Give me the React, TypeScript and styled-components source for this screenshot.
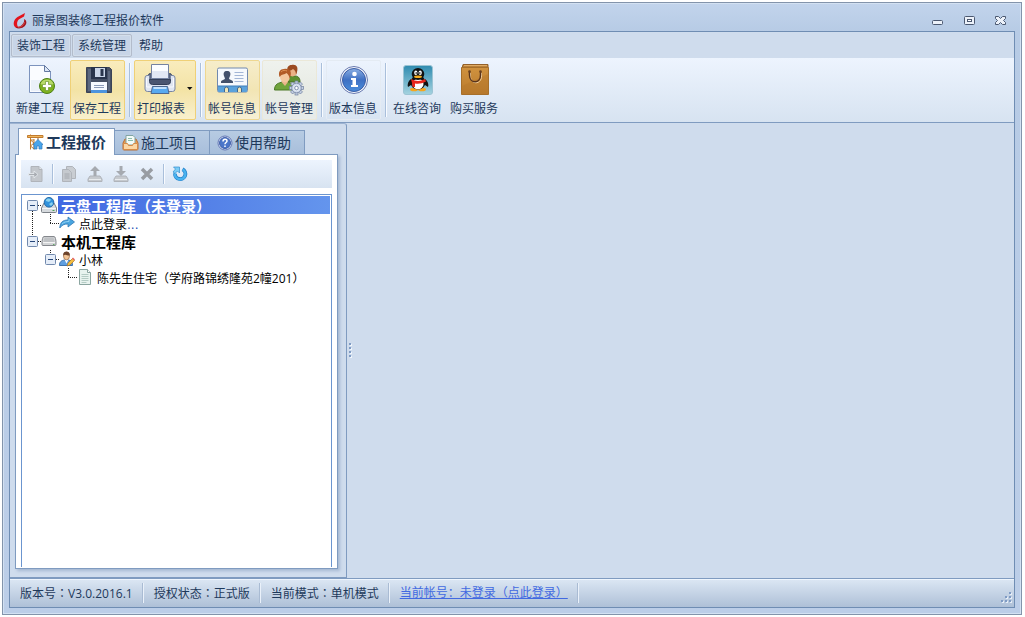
import React from "react";
import styled, { createGlobalStyle, css } from "styled-components";

const ink = "#1e395b";
const line = "#7f9bc0";
const face = "#cfdced";

const GlobalStyle = createGlobalStyle`
  * { box-sizing: border-box; }
  body {
    margin: 0;
    background: #fff;
    color: ${ink};
    font: 12px/16px "Open Sans", "Noto Sans CJK SC", sans-serif;
  }
  button { font: inherit; color: inherit; border: 0; background: none; padding: 0; margin: 0; }
`;

const Page = styled.div`
  display: flex;
  min-height: 100vh;
  padding: 2px 3px 2px 2px;
`;

const WindowFrame = styled.div`
  flex: 1;
  min-width: 0;
  display: flex;
  flex-direction: column;
  padding: 0 6px 6px;
  border: 1px solid #8394ab;
  background: linear-gradient(#c2d4ec, #b7cbe5 28px, #bccee8);
  box-shadow: inset 0 0 0 1px #d3e1f2;
`;

const TitleBar = styled.header`
  display: flex;
  align-items: center;
  height: 28px;
  padding: 7px 0 0 4px;
`;

const Title = styled.h1`
  margin: 0 auto 0 4px;
  font-size: 12px;
  line-height: 16px;
  font-weight: 400;
`;

const CaptionButton = styled.button`
  display: flex;
  width: 32px;
  height: 16px;
  align-items: center;
  justify-content: center;
  &:last-child { width: 29px; }
`;

const Client = styled.div`
  flex: 1;
  display: flex;
  flex-direction: column;
  border: 1px solid #6f8db3;
  background: ${face};
`;

const MenuBar = styled.nav`
  display: flex;
  gap: 1px;
  height: 26px;
  padding: 2px 1px;
`;

const MenuItem = styled.button<{ $boxed?: boolean }>`
  height: 23px;
  padding: 0 5px;
  border: 1px solid transparent;
  border-radius: 2px;
  ${(p) =>
    p.$boxed &&
    css`
      border-color: #b3bccb;
      background: #c8d5e7;
      box-shadow: inset 0 0 0 1px #d3deeb;
    `}
`;

const Ribbon = styled.div`
  display: flex;
  gap: 2px;
  height: 65px;
  padding: 2px 3px;
  border-bottom: 1px solid ${line};
  background: linear-gradient(#edf4fe, #d7e3f1);
`;

const RibbonGroup = styled.div`
  display: flex;
  gap: 2px;
  & + & {
    padding-left: 7px;
    background: linear-gradient(90deg, #a9bfdb 1px, #f8fbff 1px) 2px 3px / 2px 54px no-repeat;
  }
`;

type Tone = "none" | "gold" | "amber" | "fade" | "ghost";
const toneStyles: Record<Tone, ReturnType<typeof css> | null> = {
  none: null,
  gold: css`
    border-color: #efd077;
    background: linear-gradient(#f9ecbd, #f3e3a5 50%, #f9f0cd);
  `,
  amber: css`
    border-color: #eed791;
    background: linear-gradient(#f6edcb, #f2e5b4 50%, #f6f0d5);
  `,
  fade: css`
    border-color: #ebe8d8;
    background: linear-gradient(#eff2ee, #e8ebe4 50%, #e7ebea);
  `,
  ghost: css`
    border-color: #e4ebf3;
  `,
};

const RibbonButton = styled.button<{ $tone: Tone; $menu?: boolean }>`
  display: flex;
  flex-direction: column;
  align-items: flex-start;
  width: ${(p) => (p.$menu ? 62 : 55)}px;
  height: 60px;
  padding: 3px 2px 0;
  border: 1px solid transparent;
  border-radius: 2px;
  white-space: nowrap;
  ${(p) => toneStyles[p.$tone]}
`;

const RibbonIcon = styled.span`
  display: flex;
  align-items: center;
  justify-content: flex-end;
  width: 100%;
  height: 32px;
  padding-right: 9px;
  margin-bottom: 5px;
`;

const MenuIcon = styled(RibbonIcon)`
  gap: 11px;
  padding: 0;
  align-items: center;
`;

const Body = styled.main`
  flex: 1;
  display: flex;
`;

const SidePanel = styled.section`
  display: flex;
  flex-direction: column;
  flex: 0 0 337px;
  padding: 4px 8px 8px 5px;
  border: 1px solid ${line};
  border-left: 0;
  border-top-color: #9db3d1;
  border-radius: 0 3px 0 0;
`;

const Tabs = styled.div`
  display: flex;
  align-items: flex-end;
  height: 26px;
  padding-left: 3px;
`;

const Tab = styled.button<{ $active?: boolean }>`
  display: flex;
  align-items: center;
  gap: 2px;
  height: 24px;
  width: 95px;
  padding: 0 7px;
  border: 1px solid ${line};
  border-left: 0;
  border-bottom: 0;
  background: linear-gradient(#b7cbe3, #a8bfdb);
  font-size: 14px;
  white-space: nowrap;
  ${(p) =>
    p.$active &&
    css`
      position: relative;
      height: 27px;
      width: 97px;
      margin-bottom: -1px;
      padding: 0 8px;
      border-left: 1px solid ${line};
      background: #fff;
      font-size: 15px;
      font-weight: 700;
    `}
`;

const TabPage = styled.div`
  flex: 1;
  display: flex;
  flex-direction: column;
  padding: 5px 5px 1px;
  border: 1px solid ${line};
  background: #fff;
  box-shadow: 2px 2px 3px #a5b8d2;
`;

const ToolStrip = styled.div`
  display: flex;
  align-items: center;
  height: 28px;
  padding-left: 7px;
  margin-bottom: 6px;
  background: linear-gradient(#edf4fe, #d7e3f1);
`;

const ToolButton = styled.button`
  display: flex;
  width: 16px;
  height: 16px;
  margin-right: 10px;
`;

const ToolSeparator = styled.span`
  width: 2px;
  height: 20px;
  margin: 0 7px 0 -2px;
  background: linear-gradient(90deg, #a9bfdb 1px, #f8fbff 1px);
`;

const Tree = styled.ul`
  flex: 1;
  margin: 0;
  padding: 1px 1px 0;
  list-style: none;
  border: 1px solid #6b95cf;
  border-bottom: 0;
  color: #000;
`;

const TreeRow = styled.li<{ $root?: boolean }>`
  display: flex;
  align-items: center;
  height: 18px;
  white-space: nowrap;
  font-size: ${(p) => (p.$root ? 15 : 12)}px;
  font-weight: ${(p) => (p.$root ? 700 : 400)};
`;

const TreeLabel = styled.span<{ $root?: boolean; $selected?: boolean }>`
  flex: 1;
  height: 18px;
  line-height: ${(p) => (p.$root ? 20 : 22)}px;
  padding-left: ${(p) => (p.$root ? 3 : 2)}px;
  ${(p) =>
    p.$selected &&
    css`
      color: #fff;
      background: linear-gradient(90deg, #4169e1, #6495ed);
    `}
`;

const TreeIcon = styled.span<{ $root?: boolean }>`
  display: flex;
  width: ${(p) => (p.$root ? 17 : 18)}px;
`;

const Dots = styled.span`
  color: #1c4fb4;
  font-family: "DejaVu Sans", sans-serif;
`;

const Splitter = styled.div`
  display: flex;
  align-items: center;
  width: 6px;
  padding-left: 2px;
`;

const StatusBar = styled.footer`
  display: flex;
  align-items: center;
  height: 29px;
  border-top: 1px solid ${line};
  background: linear-gradient(#dce7f4, #aec0d7);
  box-shadow: inset 0 1px 0 #eef5fd;
`;

const StatusCell = styled.div`
  display: flex;
  align-items: center;
  height: 20px;
  padding: 0 10px;
  white-space: nowrap;
  border-right: 1px solid #eaf1fa;
  box-shadow: inset -1px 0 0 #a9bbd3;
`;

const Colon = styled.span`
  font-family: "Noto Sans CJK TC", sans-serif;
`;

const AccountLink = styled.a`
  color: #4169e1;
  text-decoration: underline;
`;

const Grip = styled.svg`
  margin: 8px 2px 0 auto;
`;

const Logo = () => (
  <svg width="15" height="16" viewBox="0 0 15 16">
    <path d="M12 0 4.500 4C0 7 0 12 2 14c1.500 1.200 2.500 1 3.500.500C3.500 12 3.500 8 6.500 6L11 3.500z" fill="#e3131c" />
    <path d="M11 6c3.500 1.500 3 6-.5 8-2.500 1.800-6 2-8 .3 3.500 0 5.500-1 7-3C11 9.500 11.500 8 11 6z" fill="#a3161d" />
    <path d="M5 14.200c3 0 6-2 6.500-5" stroke="#d84a4d" fill="none" />
  </svg>
);

const NewIcon = () => (
  <svg width="28" height="32" viewBox="0 0 28 32">
    <path d="M1.500 1.500h15l6 6v21h-21z" fill="#fafcff" stroke="#7c93bd" />
    <path d="M3 16h18v11H3z" fill="#eaf0f9" />
    <path d="M16.500 1.500v6h6z" fill="#dce6f5" stroke="#6479a0" />
    <circle cx="19" cy="22" r="7.500" fill="#7fb21f" stroke="#4c7f16" />
    <path d="M12.500 20a7 7 0 0 1 13 0c-4 2-9 2-13 0z" fill="#b7d96a" />
    <path d="M17.500 17.500h3v3h3v3h-3v3h-3v-3h-3v-3h3z" fill="#fff" stroke="#5b8b1b" strokeWidth=".6" />
  </svg>
);

const SaveIcon = () => (
  <svg width="28" height="32" viewBox="0 0 28 32">
    <path d="M1.500 3.500h23l2 2v23h-25z" fill="#465065" stroke="#3a4356" />
    <path d="M3 5h3v22H3zM23 7h2v20h-2z" fill="#5c687f" />
    <path d="M6 3h16v12H6z" fill="#27334b" />
    <path d="M10 4h10v9H10z" fill="#c9d5e8" />
    <path d="M15.500 5h3v7h-3z" fill="#29354d" />
    <path d="M6 18h16v11H6z" fill="#f7faff" />
    <path d="M6 26h16v3H6z" fill="#4d94dd" />
    <path d="M9 21.500h10M9 23.500h10" stroke="#8c9bb8" />
  </svg>
);

const PrintIcon = () => (
  <svg width="32" height="32" viewBox="0 0 32 32">
    <path d="M4.500 11q0-1.500 2-1.500h19q2 0 2 1.500v9h-23z" fill="#5a6680" stroke="#434f69" />
    <path d="M7.500.500h17v14h-17z" fill="#fbfdff" stroke="#7482a0" />
    <path d="M8 7h16v7H8z" fill="#e2e8f4" />
    <path d="M3 11.500h2.500v4h21v-4H29q2 0 2 2.500v11q0 2.500-2.500 2.500h-25Q1 27.500 1 25V14q0-2.500 2-2.500z" fill="#dfe5f1" stroke="#7885a2" />
    <path d="M5.500 15.500h21v2q0 3-3 3h-15q-3 0-3-3z" fill="#4b5670" stroke="#343f58" />
    <path d="M2.500 14v9h27v-9" fill="none" stroke="#f8faff" />
    <path d="M8.500 22.500h15l1.500 7H7z" fill="#59aaf0" stroke="#4f6990" />
    <path d="M9.500 23h13v2h-13z" fill="#c4e2fc" />
  </svg>
);

const CardIcon = () => (
  <svg width="31" height="32" viewBox="0 0 31 32">
    <path d="M.5 5.500q0-1.500 1.500-1.500h27q1.500 0 1.500 1.500v21q0 1.500-1.500 1.500H2Q.5 28 .5 26.500z" fill="#f6f9fd" stroke="#7189ae" />
    <path d="M1 22h29v4.500q0 1.500-1 1.500H2q-1 0-1-1.500z" fill="#5aa2dc" />
    <path d="M1 22h29" stroke="#3f7cb8" />
    <path d="M10 7c3 0 4 2 3 5l-1 2.500c.5 1.500 4 1.500 4 3.500v1H4v-1c0-2 3.500-2 4-3.500L7 12c-1-3 0-5 3-5z" fill="#43516b" />
    <path d="M17.500 8.500h9M17.500 11.500h9M17.500 14.500h9M17.500 17.500h9" stroke="#a3b6d6" />
    <path d="M7.500 28v-3a2 2 0 0 1 4 0v3M20.500 28v-3a2 2 0 0 1 4 0v3" fill="#f4e8b6" stroke="#3e6793" />
  </svg>
);

const gearTeeth = [0, 45, 90, 135, 180, 225, 270, 315];
const Gear = () => (
  <g transform="translate(22.500 24)">
    {gearTeeth.map((a) => (
      <rect key={a} x="-1.500" y="-7" width="3" height="4" fill="#c3cfe2" stroke="#71809f" strokeWidth=".7" transform={`rotate(${a})`} />
    ))}
    <circle r="4.800" fill="#cbd6e7" stroke="#71809f" strokeWidth=".7" />
    <circle r="3.500" fill="#dfe7f3" />
    <circle r="1.800" fill="#fff" stroke="#8191ad" />
  </g>
);

const UsersIcon = () => (
  <svg width="31" height="32" viewBox="0 0 31 32">
    <path d="M12 17c0-5 4-6 9-5 4 0 5 3 5 6H14z" fill="#5e912f" stroke="#456f24" />
    <ellipse cx="18.500" cy="7.500" rx="4.500" ry="5" fill="#eab285" />
    <path d="M13.500 8c-1-5 1-7 4-7 5-1 7 2 5.500 7l-1 3c0-3-1-5-3-6-2 2-3 1-5 3z" fill="#9c4b20" />
    <path d="M.5 26c0-6 4-7 8-8h5c4 1 6 3 7 8z" fill="#70a43c" stroke="#4b7927" />
    <path d="m7.500 18 3.500 4 3-4-1-3H8.500z" fill="#e9b48a" />
    <ellipse cx="11" cy="12.500" rx="5" ry="6" fill="#f4c79e" />
    <path d="M5.500 13C4 8 6 5 10 5c5-1 8 2 6.500 7l-1 3c0-3-1-4-3-6-2 2-5 1-6 3z" fill="#b25b27" />
    <path d="M7 8c2-2 4-2 6-1" stroke="#dd9055" fill="none" />
    <Gear />
  </svg>
);

const InfoIcon = () => (
  <svg width="32" height="32" viewBox="0 0 32 32">
    <defs>
      <linearGradient id="infoFill" x2="0" y2="1">
        <stop stopColor="#8aaee3" />
        <stop offset=".5" stopColor="#3f70c3" />
        <stop offset="1" stopColor="#4a8ddb" />
      </linearGradient>
    </defs>
    <circle cx="17" cy="16" r="13.500" fill="#f4f7fd" stroke="#6878ae" />
    <circle cx="17" cy="16" r="11.500" fill="url(#infoFill)" stroke="#3b5ca5" />
    <circle cx="17.500" cy="10" r="2.300" fill="#fff" />
    <path d="M14 14h5v7h2v2h-7v-2h1.500v-5H14z" fill="#fff" />
  </svg>
);

const PenguinIcon = () => (
  <svg width="30" height="32" viewBox="0 0 30 32">
    <defs>
      <linearGradient id="tile" x2="0" y2="1">
        <stop stopColor="#2f8bb0" />
        <stop offset="1" stopColor="#a5d3e0" />
      </linearGradient>
    </defs>
    <rect x=".5" y="1.500" width="29" height="29" rx="2.500" fill="url(#tile)" stroke="#9cc4d4" />
    <path d="M8 15c-3 2-4 6-3 8l3-2zM22 15c3 2 4 6 3 8l-3-2z" fill="#111" />
    <ellipse cx="11" cy="25.500" rx="4" ry="1.800" fill="#f6a61c" />
    <ellipse cx="19" cy="25.500" rx="4" ry="1.800" fill="#f6a61c" />
    <ellipse cx="15" cy="18.500" rx="7.500" ry="7" fill="#111" />
    <ellipse cx="15" cy="20" rx="5.500" ry="5.200" fill="#fff" />
    <ellipse cx="15" cy="10" rx="6.300" ry="6" fill="#111" />
    <ellipse cx="12.800" cy="8.800" rx="1.600" ry="2.300" fill="#fff" />
    <ellipse cx="17.200" cy="8.800" rx="1.600" ry="2.300" fill="#fff" />
    <circle cx="13.200" cy="9" r=".8" />
    <circle cx="16.800" cy="9" r=".8" />
    <ellipse cx="15" cy="12.800" rx="4" ry="1.300" fill="#f7ac1c" />
    <path d="M8 15c5 2.500 9 2.500 14 0l1 2.500c-4 2-7 2.500-11 2v3.500H9.500l-.5-4z" fill="#e5261c" />
  </svg>
);

const BagIcon = () => (
  <svg width="30" height="32" viewBox="0 0 30 32">
    <defs>
      <linearGradient id="bag" x2="0" y2="1">
        <stop stopColor="#d0923f" />
        <stop offset="1" stopColor="#b87a2c" />
      </linearGradient>
    </defs>
    <path d="M3 .500h25v4H2z" fill="#b9803a" stroke="#93602a" />
    <path d="M4 1h23v1H4z" fill="#dfab64" />
    <path d="M1.500 3.500h27v27h-27z" fill="url(#bag)" stroke="#a66f2a" />
    <path d="M2 22 28 10v20H2z" fill="#b5762a" opacity=".4" />
    <path d="M9.500 8v3c0 9 11 9 11 0V8" fill="none" stroke="#f2d09d" transform="translate(1 1)" />
    <path d="M9.500 8v3c0 9 11 9 11 0V8" fill="none" stroke="#59331b" strokeWidth="1.500" />
    <circle cx="9.500" cy="7.500" r="1.300" fill="#684020" />
    <circle cx="20.500" cy="7.500" r="1.300" fill="#684020" />
  </svg>
);

const CraneIcon = () => (
  <svg width="17" height="16" viewBox="0 0 17 16">
    <path d="M3.500.5v15M7 5v10.500M3.500 6 7 9l-3.500 3L7 15M3.500 6H7" stroke="#c27a2b" fill="none" />
    <path d="M.5 1.500h15.500v2H.5z" fill="#efb65e" stroke="#c27a2b" />
    <path d="M11 4v2" stroke="#a36326" />
    <path d="m11 5.500 5 5H15v4.500h-3v-3h-2v3H7v-4.500H6z" fill="#49a5eb" stroke="#3178bc" strokeWidth=".7" />
  </svg>
);

const InboxIcon = () => (
  <svg width="17" height="16" viewBox="0 0 17 16">
    <path d="m1 8 2-4h11l2 4v6q0 1-1 1H2q-1 0-1-1z" fill="#e99d51" stroke="#b86e35" />
    <path d="M4 .5h7l2 2V10H4z" fill="#f4fbf8" stroke="#81a4a3" />
    <path d="M6 3.500h4M6 5.500h5" stroke="#8abfad" />
    <path d="M1.500 8.500h4l1 2h4l1-2h4v6h-14z" fill="#fbd7a5" stroke="#d58b48" />
  </svg>
);

const HelpIcon = () => (
  <svg width="16" height="16" viewBox="0 0 16 16">
    <circle cx="8" cy="8" r="7" fill="#e9f0fd" stroke="#6276b4" />
    <circle cx="8" cy="8" r="5.500" fill="#4c75c9" stroke="#4160a9" />
    <path d="M6 6.500c0-3 4-3 4-.5C10 7.500 8 7.500 8 9.200M8 10.500v1.500" fill="none" stroke="#fff" strokeWidth="1.500" />
  </svg>
);

const grey = "#b0b4ba";
const ImportIcon = () => (
  <svg width="16" height="16" viewBox="0 0 16 16">
    <path d="M3 .5h8l3 3v12H3z" fill="#c3c7cc" stroke={grey} />
    <path d="M11 .5v3h3" fill="#e6e9ed" stroke={grey} />
    <path d="M.5 7.500H6V5l4 3.500L6 12V9.500H.5z" fill="#a9adb3" stroke="#e9edf1" strokeWidth=".8" />
  </svg>
);
const CopyIcon = () => (
  <svg width="16" height="16" viewBox="0 0 16 16">
    <path d="M5.500.5h6l3 3v9h-9z" fill="#c9cdd2" stroke={grey} />
    <path d="M1.500 3.500h6l3 3v9h-9z" fill="#c5c9ce" stroke={grey} />
    <path d="M3.500 8h5M3.500 10h5M3.500 12h5" stroke="#a4a8ae" />
  </svg>
);
const TransferIcon = ({ down }: { down?: boolean }) => (
  <svg width="16" height="16" viewBox="0 0 16 16">
    <path d="M3 10h10l2 3v2.500H1V13z" fill="#c5c9ce" stroke={grey} />
    <path d="M2 13.500h12" stroke="#e8ebee" />
    <path d={down ? "M6.500 0h3v5H13L8 10 3 5h3.500z" : "M6.500 10h3V5H13L8 0 3 5h3.500z"} fill="#a6aab0" />
  </svg>
);
const DeleteIcon = () => (
  <svg width="16" height="16" viewBox="0 0 16 16">
    <path d="m3 3 10 10m0-10L3 13" stroke="#989ca2" strokeWidth="3.500" />
  </svg>
);
const RefreshIcon = () => (
  <svg width="16" height="16" viewBox="0 0 16 16">
    <path d="M10.500 3.200A5.200 5.200 0 1 1 3 7.500" fill="none" stroke="#2783cb" strokeWidth="3.800" />
    <path d="M10.700 3.500A5.200 5.200 0 1 1 3 7.500" fill="none" stroke="#49b3f0" strokeWidth="2.400" />
    <path d="M1.500 1h6v6L5.500 5 3 7.500 1 6 3.500 3z" fill="#7bcdf7" stroke="#318ece" strokeWidth=".7" />
  </svg>
);

const DriveIcon = ({ cloud }: { cloud?: boolean }) => (
  <svg width="16" height="16" viewBox="0 0 16 16">
    {cloud ? (
      <>
        <path d="M3 6h10l2.500 5v3.500q0 1-1 1h-13q-1 0-1-1V11z" fill="#d6dade" stroke="#7b8087" />
        <path d="M1 11.500h14" stroke="#f4f6f8" />
        <path d="M11.500 13.500h2" stroke="#4aa056" />
        <circle cx="8" cy="5.300" r="4.800" fill="#3192dc" stroke="#2369a8" />
        <path d="M5 3c2-3 5-1 5 0L8 5 5 4zM8 7l3-2 1 2-2 2z" fill="#8bd1ed" />
      </>
    ) : (
      <>
        <path d="M3 3.500h10q1 0 1.500 2l.5 3v3q0 1-1 1H2q-1 0-1-1v-3l.5-3q.5-2 1.500-2z" fill="#d2d4d6" stroke="#85888d" />
        <path d="M3.500 4.500h9l1 4.500h-11z" fill="#bfc2c5" />
        <path d="M2 9.500h12" stroke="#f4f4f4" />
        <path d="M12 11.500h1.500" stroke="#62ae66" />
      </>
    )}
  </svg>
);
const ArrowIcon = () => (
  <svg width="16" height="16" viewBox="0 0 16 16">
    <path d="M.8 13C1 7 4 5 9 5V2l6.500 5L9 12V9C5 9 3 10 .8 13z" fill="#49a5df" stroke="#3178b5" strokeWidth=".8" />
    <path d="M3 9c2-2 4-2.500 7-2.500V4" stroke="#91d1f4" fill="none" />
  </svg>
);
const PersonIcon = () => (
  <svg width="16" height="16" viewBox="0 0 16 16">
    <path d="M.5 14.500c0-4 2-5 5-5.500h4c3 .5 4 2 4 5.500z" fill="#5f9fe0" stroke="#3f73ad" />
    <path d="m5.500 8.500 2 4 2-4z" fill="#fff" />
    <ellipse cx="7.500" cy="5" rx="3" ry="3.800" fill="#f2c596" stroke="#99633b" strokeWidth=".7" />
    <path d="M4.300 4.500c-1-5.500 7.400-5.500 6.400 0-2.400.5-4-2-6.400 0z" fill="#6d432b" />
    <path d="m8 15 1-3 4.500-4.500 2 2L11 14z" fill="#f3be40" stroke="#a8732b" strokeWidth=".7" />
    <path d="m13 7.500 2 2 1-1-2-2z" fill="#e86268" />
  </svg>
);
const DocumentIcon = () => (
  <svg width="16" height="16" viewBox="0 0 16 16">
    <path d="M2.500.5h8l3 3v12h-11z" fill="#e8f3ef" stroke="#8ba5a0" />
    <path d="M10.500.5v3h3" fill="#fff" stroke="#8ba5a0" />
    <path d="M4.500 5.500h7M4.500 7.500h7M4.500 9.500h7M4.500 11.500h7M4.500 13.500h5" stroke="#b4cbc4" />
  </svg>
);

interface Node {
  label: React.ReactNode;
  icon: React.ReactNode;
  level: number;
  expandable?: boolean;
  selected?: boolean;
  guides: string;
}

const nodes: Node[] = [
  { label: "云盘工程库（未登录）", icon: <DriveIcon cloud />, level: 0, expandable: true, selected: true, guides: "M9.500 15v3M15 9.500h3" },
  { label: <>点此登录<Dots>...</Dots></>, icon: <ArrowIcon />, level: 1, guides: "M9.500 0v18M27.500 0v10M27 9.500h9" },
  { label: "本机工程库", icon: <DriveIcon />, level: 0, expandable: true, guides: "M9.500 0v4M15 9.500h3" },
  { label: "小林", icon: <PersonIcon />, level: 1, expandable: true, guides: "M27.500 0v4M33 9.500h3" },
  { label: "陈先生住宅（学府路锦绣隆苑2幢201）", icon: <DocumentIcon />, level: 2, guides: "M45.500 0v10M45 9.500h9" },
];

const TreeGuides = ({ node }: { node: Node }) => {
  const width = (node.level + 1) * 18;
  return (
    <svg width={width} height="18" viewBox={`0 0 ${width} 18`}>
      <path d={node.guides} stroke="#222" strokeDasharray="1 1" fill="none" />
      {node.expandable && (
        <g transform={`translate(${node.level * 18} 0)`}>
          <rect x="4.500" y="4.500" width="10" height="10" rx="1" fill="#e5edf8" stroke="#7189ad" />
          <path d="M7 9.500h5" stroke="#26477a" />
        </g>
      )}
    </svg>
  );
};

interface Command {
  label: string;
  icon: React.ReactNode;
  tone: Tone;
  menu?: boolean;
}

const commandGroups: Command[][] = [
  [
    { label: "新建工程", icon: <NewIcon />, tone: "none" },
    { label: "保存工程", icon: <SaveIcon />, tone: "gold" },
  ],
  [{ label: "打印报表", icon: <PrintIcon />, tone: "gold", menu: true }],
  [
    { label: "帐号信息", icon: <CardIcon />, tone: "amber" },
    { label: "帐号管理", icon: <UsersIcon />, tone: "fade" },
  ],
  [{ label: "版本信息", icon: <InfoIcon />, tone: "ghost" }],
  [
    { label: "在线咨询", icon: <PenguinIcon />, tone: "none" },
    { label: "购买服务", icon: <BagIcon />, tone: "none" },
  ],
];

export default function App() {
  return (
    <Page>
      <GlobalStyle />
      <WindowFrame>
        <TitleBar>
          <Logo />
          <Title>丽景图装修工程报价软件</Title>
          <CaptionButton aria-label="最小化">
            <svg width="12" height="10">
              <rect x=".5" y="4.500" width="10" height="4" rx="1" fill="#edf2fa" stroke="#4b5870" />
            </svg>
          </CaptionButton>
          <CaptionButton aria-label="最大化">
            <svg width="12" height="10">
              <rect x=".5" y=".5" width="10" height="8" rx="1" fill="#edf2fa" stroke="#4b5870" />
              <rect x="3.500" y="3.500" width="4" height="2" fill="#fff" stroke="#4b5870" />
            </svg>
          </CaptionButton>
          <CaptionButton aria-label="关闭">
            <svg width="12" height="10">
              <path d="M.5.5h3l2 2 2-2h3v2l-2 2 2 2v2h-3l-2-2-2 2h-3v-2l2-2-2-2z" fill="#edf2fa" stroke="#4b5870" />
            </svg>
          </CaptionButton>
        </TitleBar>
        <Client>
          <MenuBar>
            <MenuItem $boxed>装饰工程</MenuItem>
            <MenuItem $boxed>系统管理</MenuItem>
            <MenuItem>帮助</MenuItem>
          </MenuBar>
          <Ribbon>
            {commandGroups.map((group, i) => (
              <RibbonGroup key={i}>
                {group.map((c) => (
                  <RibbonButton key={c.label} $tone={c.tone} $menu={c.menu}>
                    {c.menu ? (
                      <MenuIcon>
                        {c.icon}
                        <svg width="6" height="20">
                          <path d="M0 18h5.500L2.750 21z" transform="translate(0 -1)" fill="#111" />
                        </svg>
                      </MenuIcon>
                    ) : (
                      <RibbonIcon>{c.icon}</RibbonIcon>
                    )}
                    {c.label}
                  </RibbonButton>
                ))}
              </RibbonGroup>
            ))}
          </Ribbon>
          <Body>
            <SidePanel>
              <Tabs role="tablist">
                <Tab role="tab" aria-selected $active><CraneIcon />工程报价</Tab>
                <Tab role="tab"><InboxIcon />施工项目</Tab>
                <Tab role="tab"><HelpIcon />使用帮助</Tab>
              </Tabs>
              <TabPage>
                <ToolStrip>
                  <ToolButton aria-label="导入"><ImportIcon /></ToolButton>
                  <ToolSeparator />
                  <ToolButton aria-label="复制"><CopyIcon /></ToolButton>
                  <ToolButton aria-label="上传"><TransferIcon /></ToolButton>
                  <ToolButton aria-label="下载"><TransferIcon down /></ToolButton>
                  <ToolButton aria-label="删除"><DeleteIcon /></ToolButton>
                  <ToolSeparator />
                  <ToolButton aria-label="刷新"><RefreshIcon /></ToolButton>
                </ToolStrip>
                <Tree role="tree">
                  {nodes.map((n, i) => (
                    <TreeRow key={i} role="treeitem" aria-selected={!!n.selected} $root={n.level === 0}>
                      <TreeGuides node={n} />
                      <TreeIcon $root={n.level === 0}>{n.icon}</TreeIcon>
                      <TreeLabel $root={n.level === 0} $selected={n.selected}>{n.label}</TreeLabel>
                    </TreeRow>
                  ))}
                </Tree>
              </TabPage>
            </SidePanel>
            <Splitter>
              <svg width="3" height="15">
                {[0, 4, 8, 12].map((y) => (
                  <g key={y}>
                    <rect x="1" y={y + 1} width="2" height="2" fill="#eff5fc" />
                    <rect y={y} width="2" height="2" fill="#7f9bc4" />
                  </g>
                ))}
              </svg>
            </Splitter>
          </Body>
          <StatusBar>
            <StatusCell><span>版本号<Colon>：</Colon>V3.0.2016.1</span></StatusCell>
            <StatusCell><span>授权状态<Colon>：</Colon>正式版</span></StatusCell>
            <StatusCell><span>当前模式<Colon>：</Colon>单机模式</span></StatusCell>
            <StatusCell><AccountLink href="#login">当前帐号：未登录（点此登录）</AccountLink></StatusCell>
            <Grip width="12" height="12">
              {[[9, 1], [5, 5], [9, 5], [1, 9], [5, 9], [9, 9]].map(([x, y]) => (
                <g key={`${x}-${y}`}>
                  <rect x={x + 1} y={y + 1} width="2" height="2" fill="#e6eef8" />
                  <rect x={x} y={y} width="2" height="2" fill="#7f9bc4" />
                </g>
              ))}
            </Grip>
          </StatusBar>
        </Client>
      </WindowFrame>
    </Page>
  );
}
